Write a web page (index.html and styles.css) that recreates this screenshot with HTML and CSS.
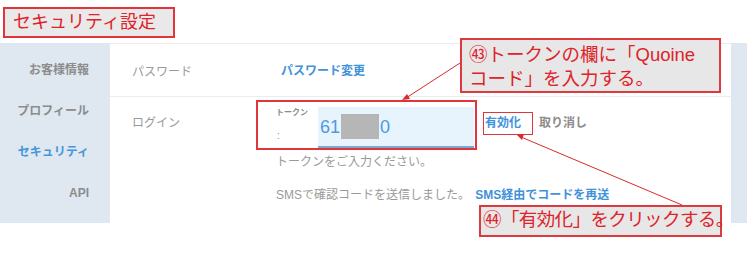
FILE: index.html
```html
<!DOCTYPE html>
<html lang="ja">
<head>
<meta charset="utf-8">
<link rel="stylesheet" href="styles.css">
</head>
<body>
<div class="page">
  <div class="title">セキュリティ設定</div>
  <div class="panel">
    <nav class="sidebar">
      <div class="nav-item">お客様情報</div>
      <div class="nav-item">プロフィール</div>
      <div class="nav-item active">セキュリティ</div>
      <div class="nav-item">API</div>
    </nav>
    <main class="main">
      <div class="row row-pass">
        <div class="label">パスワード</div>
        <div class="value"><a class="link">パスワード変更</a></div>
      </div>
      <div class="row row-login">
        <div class="label label-login">ログイン</div>
        <div class="login-body">
          <div class="field-line">
            <div class="field">
              <div class="field-label">
                <span class="fl-top">トークン</span>
                <span class="fl-colon">:</span>
              </div>
              <div class="input">
                <span class="digits">61</span><span class="redact"></span><span class="digits">0</span>
              </div>
            </div>
            <div class="actions">
              <a class="link act">有効化</a>
              <span class="cancel">取り消し</span>
            </div>
          </div>
          <div class="hint">トークンをご入力ください。</div>
          <div class="sms">SMSで確認コードを送信しました。 <a class="link">SMS経由でコードを再送</a></div>
        </div>
      </div>
    </main>
    <div class="strip"></div>
  </div>

  <div class="mark mark-field"></div>
  <div class="mark mark-act"></div>
  <div class="note note-43">㊸トークンの欄に「Quoine<br>コード」を入力する。</div>
  <div class="note note-44">㊹「有効化」をクリックする。</div>
  <svg class="arrows" width="750" height="253" viewBox="0 0 750 253">
    <line x1="460" y1="63" x2="406" y2="98" stroke="#d92b2b" stroke-width="1"/>
    <polygon points="402,100 407,94 410,99" fill="#d92b2b"/>
    <line x1="682" y1="205" x2="521" y2="137" stroke="#d92b2b" stroke-width="1"/>
    <polygon points="517,135 524,134 522,140" fill="#d92b2b"/>
  </svg>
</div>
</body>
</html>
```
FILE: styles.css
```css
* { box-sizing: border-box; }
html, body { margin: 0; padding: 0; background: #fff; }
body {
  width: 750px;
  height: 253px;
  overflow: hidden;
  font-family: "Liberation Sans", "Noto Sans CJK JP", sans-serif;
}
.page { position: relative; width: 750px; height: 253px; }

.title {
  display: inline-block;
  margin: 7px 0 0 3px;
  width: 172px;
  height: 31px;
  padding-left: 8px;
  border: 2px solid #e0353b;
  background: #e9e9e9;
  color: #e0222a;
  font-size: 18px;
  line-height: 27px;
}

.panel {
  display: flex;
  margin-top: 5px;
  height: 180px;
}
.sidebar {
  width: 110px;
  background: #dfe8f0;
  padding-top: 7px;
}
.nav-item {
  height: 41px;
  line-height: 41px;
  text-align: right;
  padding-right: 21px;
  font-size: 12px;
  font-weight: bold;
  color: #8c8c8c;
}
.nav-item.active { color: #4596dc; }

.main {
  flex: 1;
  border-top: 1px solid #ececec;
}
.strip {
  width: 16px;
  background: #dfe8f0;
  margin-right: 3px;
}

.row { display: flex; }
.row-pass {
  height: 53px;
  border-bottom: 1px solid #ececec;
  align-items: center;
}
.label {
  width: 171px;
  padding-left: 22px;
  font-size: 12px;
  color: #9a9a9a;
}
.label-login { width: 166px; padding-top: 17px; line-height: 18px; }
.link {
  color: #3f92da;
  font-weight: bold;
  font-size: 12px;
}

.login-body { padding-top: 10px; }
.field-line { display: flex; align-items: flex-start; }
.field { display: flex; width: 198px; height: 41px; }
.field-label {
  width: 42px;
  display: flex;
  flex-direction: column;
  padding-top: 1px;
  color: #8a8a8a;
}
.fl-top { font-size: 8px; font-weight: bold; line-height: 10px; }
.fl-colon { font-size: 10px; line-height: 12px; margin-top: 12px; padding-left: 1px; }
.input {
  flex: 1;
  background: #e7f3fd;
  border-bottom: 2px solid #7aa8d0;
  display: flex;
  align-items: center;
  padding-left: 2px;
}
.digits { font-size: 18px; color: #4a9be0; line-height: 20px; }
.redact {
  width: 38px;
  height: 25px;
  background: #b6b6b6;
  margin: 0 1px 0 1px;
}
.actions {
  display: flex;
  gap: 18px;
  margin-left: 11px;
  margin-top: 7px;
  line-height: 18px;
}
.cancel { font-size: 12px; color: #8c8c8c; font-weight: bold; }

.hint {
  margin-top: 5px;
  font-size: 12px;
  line-height: 18px;
  color: #9a9a9a;
}
.sms {
  margin-top: 15px;
  font-size: 12px;
  line-height: 18px;
  color: #9a9a9a;
}
.sms .link { margin-left: 2px; }

.mark {
  position: absolute;
  border: 2px solid #e0353b;
}
.mark-field { left: 256px; top: 100px; width: 221px; height: 50px; }
.mark-act { left: 483px; top: 112px; width: 50px; height: 23px; border-width: 1.5px; }

.note {
  position: absolute;
  background: #e7e7e7;
  border: 2px solid #dc3a3e;
  color: #e0222a;
  font-size: 18.5px;
  white-space: nowrap;
}
.note-43 {
  left: 460px; top: 38px; width: 261px; height: 55px;
  padding: 3px 0 0 7px;
  line-height: 24px;
}
.note-44 {
  left: 479px; top: 205px; width: 243px; height: 32px;
  padding-left: 2px;
  line-height: 26px;
  letter-spacing: -0.6px;
}
.arrows { position: absolute; left: 0; top: 0; pointer-events: none; }
```
